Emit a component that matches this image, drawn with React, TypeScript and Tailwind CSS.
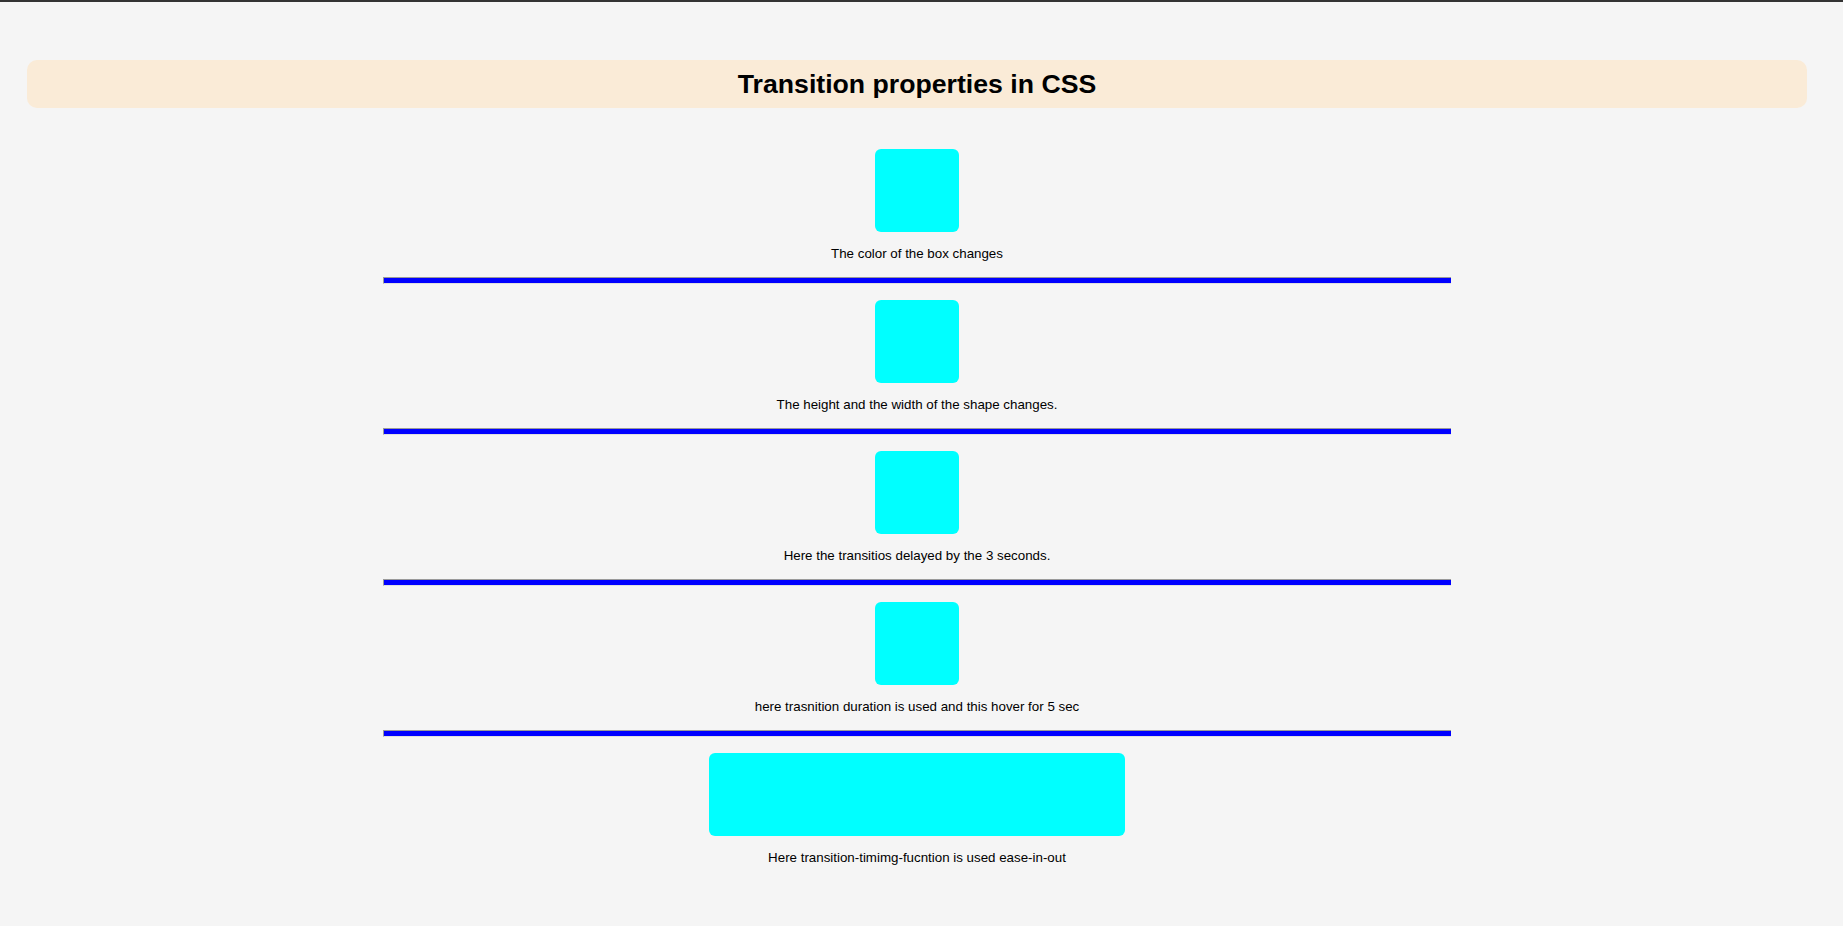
const sections = [
  { text: "The color of the box changes", wide: false },
  { text: "The height and the width of the shape changes.", wide: false },
  { text: "Here the transitios delayed by the 3 seconds.", wide: false },
  { text: "here trasnition duration is used and this hover for 5 sec", wide: false },
  { text: "Here transition-timimg-fucntion is used ease-in-out", wide: true },
];

export default function App() {
  return (
    <div className="min-h-[926px] bg-[#f5f5f5] text-black font-['Liberation_Sans',Arial,sans-serif]">
      <div className="h-[2px] bg-[#333333]" />
      <div className="ml-[27px] mr-[36px] pt-[58px] pb-[60px]">
        <header className="h-[48px] rounded-[10px] bg-[#faebd7] flex items-center justify-center">
          <h1 className="text-[26.67px] font-bold leading-none">Transition properties in CSS</h1>
        </header>
        <main className="mt-[41px] flex flex-col items-center">
          {sections.map((s, i) => (
            <div key={i} className="w-full flex flex-col items-center">
              <div
                className={
                  s.wide
                    ? "w-[416px] h-[83px] rounded-[6px] bg-[#00ffff]"
                    : "w-[84px] h-[83px] rounded-[6px] bg-[#00ffff]"
                }
              />
              <p className="mt-[14px] text-[13.33px] leading-[15px]">{s.text}</p>
              {i < sections.length - 1 && (
                <div className="mt-[16px] mb-[16px] w-[60%] h-[7px] bg-[#0000ff] border-t border-l border-[#9a9a9a] border-b border-b-[#e0e0e0]" />
              )}
            </div>
          ))}
        </main>
      </div>
    </div>
  );
}
